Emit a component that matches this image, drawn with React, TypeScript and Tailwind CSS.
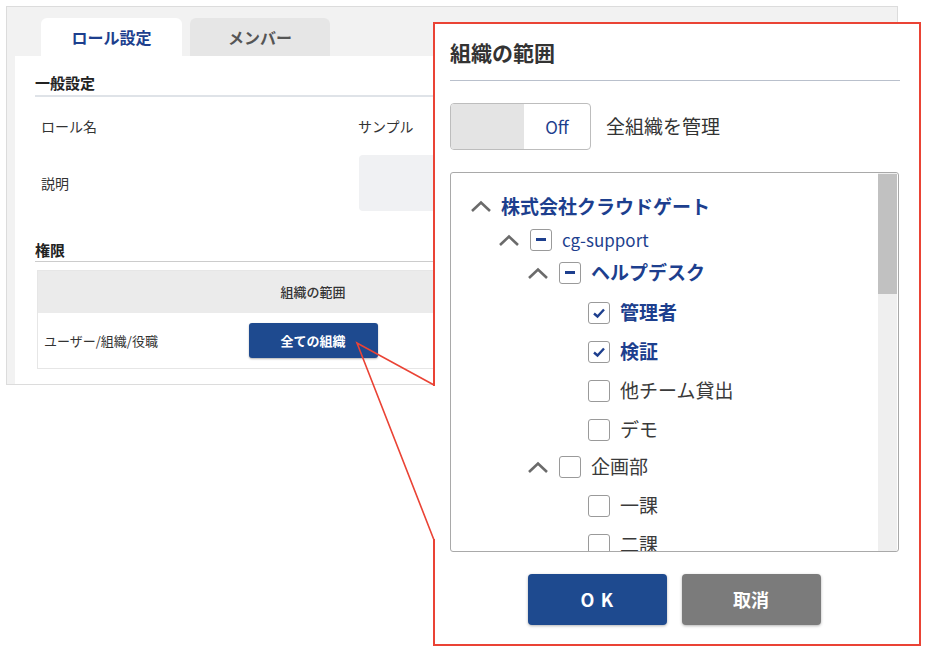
import React from "react";

type Node = {
  label: string;
  depth: number;
  chevron?: boolean;
  box?: "minus" | "check" | "empty";
  bold?: boolean;
  blue?: boolean;
  h: string;
};

const tree: Node[] = [
  { label: "株式会社クラウドゲート", depth: 0, chevron: true, bold: true, blue: true, h: "h-[34px]" },
  { label: "cg-support", depth: 1, chevron: true, box: "minus", blue: true, h: "h-[33px]" },
  { label: "ヘルプデスク", depth: 2, chevron: true, box: "minus", bold: true, blue: true, h: "h-[33px]" },
  { label: "管理者", depth: 3, box: "check", bold: true, blue: true, h: "h-[39px] mt-[4px]" },
  { label: "検証", depth: 3, box: "check", bold: true, blue: true, h: "h-[39px]" },
  { label: "他チーム貸出", depth: 3, box: "empty", h: "h-[39px]" },
  { label: "デモ", depth: 3, box: "empty", h: "h-[39px]" },
  { label: "企画部", depth: 2, chevron: true, box: "empty", h: "h-[35px]" },
  { label: "一課", depth: 3, box: "empty", h: "h-[39px] mt-[2px]" },
  { label: "二課", depth: 3, box: "empty", h: "h-[39px]" },
];

const indent = ["pl-[19px]", "pl-[47px]", "pl-[76px]", "pl-[137px]"];

function Chevron() {
  return (
    <svg width="22" height="14" viewBox="0 0 22 14" className="shrink-0">
      <polyline points="2,12 11,3.5 20,12" fill="none" stroke="#6b6b6b" strokeWidth="2.6" />
    </svg>
  );
}

function Box({ kind }: { kind: "minus" | "check" | "empty" }) {
  return (
    <span className="flex h-[22px] w-[22px] shrink-0 items-center justify-center rounded-[3px] border-[1.5px] border-[#9a9a9a] bg-white">
      {kind === "minus" && <span className="h-[2.5px] w-[10px] bg-[#1d3f8e]" />}
      {kind === "check" && (
        <svg width="14" height="12" viewBox="0 0 14 12">
          <polyline points="2,6.5 5.5,9.5 12,2.5" fill="none" stroke="#1d3f8e" strokeWidth="2.4" />
        </svg>
      )}
    </span>
  );
}

export default function App() {
  return (
    <div className="relative h-[654px] w-[932px] overflow-hidden bg-white font-['Noto_Sans_CJK_JP','Noto_Sans',sans-serif] text-[#333]">
      {/* Background page */}
      <div className="ml-[6px] mt-[6px] flex h-[379px] w-[892px] flex-col border border-[#dcdcdc] bg-[#f2f2f2] pl-[8px] pr-[10px] pt-[11px]">
        <div className="flex gap-[8px] pl-[26px]">
          <div className="flex h-[38px] w-[141px] items-center justify-center rounded-t-[6px] bg-white text-[16px] font-bold text-[#1d3f8e]">
            ロール設定
          </div>
          <div className="flex h-[38px] w-[140px] items-center justify-center rounded-t-[6px] bg-[#e6e6e6] text-[16px] font-bold text-[#555]">
            メンバー
          </div>
        </div>

        <div className="flex-1 bg-white pl-[20px] pr-[14px] pt-[16px]">
          <div className="border-b-2 border-[#dfe3e8] pb-[1px] text-[15px] font-bold leading-[22px] text-[#222]">
            一般設定
          </div>
          <div className="flex h-[58px] items-center pl-[6px] text-[14px]">
            <span className="w-[317px]">ロール名</span>
            <span>サンプル</span>
          </div>
          <div className="flex h-[56px] items-center pl-[6px] text-[14px]">
            <span className="w-[318px]">説明</span>
            <div className="h-[56px] flex-1 rounded-[4px] bg-[#f0f1f3]" />
          </div>
          <div className="mt-[28px] border-b border-[#cccccc] text-[15px] font-bold leading-[22px] text-[#222]">
            権限
          </div>
          <div className="ml-[2px] mt-[8px] w-[830px] border border-[#e6e6e6] text-[13px]">
            <div className="flex h-[42px] items-center bg-[#ebebeb]">
              <span className="w-[188px]" />
              <span className="w-[174px] text-center font-medium">組織の範囲</span>
            </div>
            <div className="flex h-[55px] items-center">
              <span className="w-[188px] pl-[6px]">ユーザー/組織/役職</span>
              <div className="flex w-[174px] justify-center">
                <button className="h-[35px] w-[129px] rounded-[3px] bg-[#1e4a8f] text-[13px] font-bold text-white shadow-[0_1px_2px_rgba(0,0,0,0.3)]">
                  全ての組織
                </button>
              </div>
            </div>
          </div>
        </div>
      </div>

      {/* Popup */}
      <div className="absolute left-[433px] top-[22px] flex h-[624px] w-[488px] flex-col border-2 border-[#ea4335] bg-white pl-[15px] pr-[19px] pt-[14px]">
        <div className="border-b border-[#b9c0cc] pb-[14px] text-[21px] font-bold leading-[28px] text-[#333]">
          組織の範囲
        </div>

        <div className="mt-[22px] flex items-center gap-[15px]">
          <div className="flex h-[47px] w-[141px] overflow-hidden rounded-[4px] border border-[#bdbdbd]">
            <div className="w-[73px] bg-[#e4e4e4]" />
            <div className="flex flex-1 items-center justify-center text-[17px] text-[#1d3f8e]">Off</div>
          </div>
          <span className="text-[19px] text-[#333]">全組織を管理</span>
        </div>

        <div className="mt-[22px] flex h-[380px] w-[449px] overflow-hidden rounded-[3px] border-[1.5px] border-[#a9a9a9]">
          <div className="flex flex-1 flex-col overflow-hidden pt-[16px]">
            {tree.map((n) => (
              <div key={n.label} className={`flex shrink-0 items-center ${n.h} ${indent[n.depth]}`}>
                {n.chevron && (
                  <span className={n.depth === 0 ? "mr-[9px]" : "mr-[10px]"}>
                    <Chevron />
                  </span>
                )}
                {n.box && (
                  <span className="mr-[10px]">
                    <Box kind={n.box} />
                  </span>
                )}
                <span
                  className={`whitespace-nowrap ${n.label === "cg-support" ? "text-[17px]" : "text-[19px]"} ${
                    n.bold ? "font-bold" : ""
                  } ${n.blue ? "text-[#1d3f8e]" : "text-[#3a3a3a]"}`}
                >
                  {n.label}
                </span>
              </div>
            ))}
          </div>
          <div className="mr-[1px] flex w-[19px] flex-col bg-[#efefef] py-[1px]">
            <div className="h-[120px] bg-[#c1c1c1]" />
          </div>
        </div>

        <div className="mt-[22px] flex justify-center gap-[15px] pr-[2px]">
          <button className="h-[51px] w-[139px] rounded-[4px] bg-[#1e4a8f] pl-[6px] text-[18px] font-bold tracking-[0.35em] text-white shadow-[0_1px_3px_rgba(0,0,0,0.3)]">
            OK
          </button>
          <button className="h-[51px] w-[139px] rounded-[4px] bg-[#7b7b7b] text-[18px] font-bold text-white shadow-[0_1px_3px_rgba(0,0,0,0.3)]">
            取消
          </button>
        </div>
      </div>

      {/* Callout pointer */}
      <svg className="pointer-events-none absolute left-0 top-0" width="932" height="654">
        <rect x="432" y="386" width="4" height="153" fill="#ffffff" />
        <polyline points="434,385 357,343 434,540" fill="none" stroke="#ea4335" strokeWidth="1.6" />
      </svg>
    </div>
  );
}
